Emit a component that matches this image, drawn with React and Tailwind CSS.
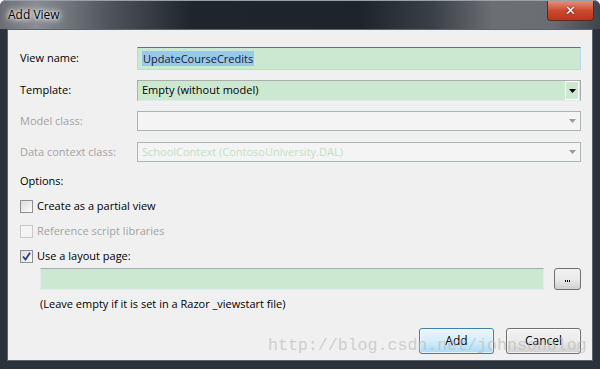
import React from 'react';

const font = { fontFamily: '"Open Sans", "Noto Sans", sans-serif' };

const Arrow = ({ disabled }) => (
  <svg width="7" height="4" viewBox="0 0 7 4">
    <path d="M0 0h7L3.5 4z" fill={disabled ? '#9a9a9a' : '#000'} />
  </svg>
);

const Checkbox = ({ checked, disabled }) => (
  <div
    className={`w-[13px] h-[13px] border flex items-center justify-center ${
      disabled ? 'border-[#c8c8c8] bg-[#f4f4f4]' : 'border-[#8e8f8f] bg-gradient-to-br from-[#dcdcdc] to-[#fbfbfb]'
    }`}
  >
    {checked && (
      <svg width="9" height="9" viewBox="0 0 9 9">
        <path d="M1 4.5l2.5 3L8 0.8" stroke="#2a3a86" strokeWidth="1.8" fill="none" />
      </svg>
    )}
  </div>
);

const Row = ({ label, disabled, children, h }) => (
  <div className={`flex items-center ${h}`}>
    <div className={`w-[117px] shrink-0 ${disabled ? 'text-[#a3a3a3]' : 'text-black'}`}>{label}</div>
    <div className="flex-1 h-full">{children}</div>
  </div>
);

export default function App() {
  return (
    <div
      className="w-[600px] h-[369px] relative flex flex-col rounded-t-[6px] bg-[#2b323b] overflow-hidden text-[11px] text-black"
      style={font}
    >
      {/* title bar */}
      <div className="h-[29px] shrink-0 flex items-start bg-[linear-gradient(90deg,#6a6e74_0%,#8a8e94_6%,#50555d_18%,#1f252d_32%,#1e242c_60%,#3a4048_72%,#6b6e73_82%,#6a6d72_92%,#3f454c_100%)] border-t border-[#9aa0a6] rounded-t-[6px]">
        <div className="pl-[8px] pt-[5px] text-[12px] text-black [text-shadow:0_0_8px_#ffffff,0_0_6px_#ffffff,0_0_3px_#ffffff]">Add View</div>
        <div className="ml-auto mr-[6px] w-[47px] h-[20px] rounded-b-[4px] border border-t-0 border-[#5a2a22] bg-gradient-to-b from-[#e0907c] via-[#cc4a2e] to-[#b8361c] flex items-center justify-center">
          <span className="text-white font-bold text-[13px] leading-none [text-shadow:0_0_2px_#3a1a10]" style={{ fontFamily: '"DejaVu Sans", sans-serif' }}>✕</span>
        </div>
      </div>

      {/* body */}
      <div className="flex-1 mx-[7px] mb-[8px] border border-[#5b636c] bg-[#f0f0f0] flex flex-col pl-[12px] pr-[11px] pt-[17px]">
        <Row label="View name:" h="h-[23px]">
          <div className="h-full bg-[#cde8d1] border border-[#b7d9ed] border-t-[#3d7bad] flex items-center pl-[4px]">
            <span className="bg-[#98c8ea] text-[#1a1a2e] px-[1px] leading-[15px]">UpdateCourseCredits</span>
          </div>
        </Row>
        <div className="h-[10px]" />
        <Row label="Template:" h="h-[21px]">
          <div className="h-full bg-[#cde8d1] border border-[#adadad] border-b-[#dfe7ef] flex items-center pl-[4px]">
            <span>Empty (without model)</span>
            <div className="ml-auto mr-[1px] w-[14px] h-[19px] border border-[#ffffff] flex items-center justify-center">
              <Arrow />
            </div>
          </div>
        </Row>
        <div className="h-[10px]" />
        <Row label="Model class:" disabled h="h-[20px]">
          <div className="h-full bg-[#f4f4f4] border border-[#acb6ac] flex items-center pr-[4px]">
            <div className="ml-auto"><Arrow disabled /></div>
          </div>
        </Row>
        <div className="h-[11px]" />
        <Row label="Data context class:" disabled h="h-[20px]">
          <div className="h-full bg-[#f4f4f4] border border-[#acb6ac] flex items-center pl-[4px] pr-[4px]">
            <span className="text-[#bfe2c4]">SchoolContext (ContosoUniversity.DAL)</span>
            <div className="ml-auto"><Arrow disabled /></div>
          </div>
        </Row>

        <div className="mt-[10px] h-[18px] flex items-center">Options:</div>
        <div className="mt-[9px] flex items-center gap-[4px] h-[14px]">
          <Checkbox />
          <span>Create as a partial view</span>
        </div>
        <div className="mt-[11px] flex items-center gap-[4px] h-[14px] text-[#a3a3a3]">
          <Checkbox disabled />
          <span>Reference script libraries</span>
        </div>
        <div className="mt-[11px] flex items-center gap-[4px] h-[14px]">
          <Checkbox checked />
          <span>Use a layout page:</span>
        </div>
        <div className="mt-[5px] pl-[20px] flex items-center h-[22px]">
          <div className="flex-1 h-full bg-[#cde8d1] border border-[#e3e9ef] border-t-[#abadb3]" />
          <div className="ml-[10px] w-[27px] h-full rounded-[3px] border border-[#707070] bg-gradient-to-b from-[#f2f2f2] via-[#ebebeb] to-[#cfcfcf] flex items-end justify-center gap-[1px] pb-[7px]">
            <div className="w-[1px] h-[2px] bg-black" />
            <div className="w-[1px] h-[2px] bg-black" />
            <div className="w-[1px] h-[2px] bg-black" />
          </div>
        </div>
        <div className="pl-[20px] mt-[6px] h-[16px] flex items-center">(Leave empty if it is set in a Razor _viewstart file)</div>

        <div className="mt-[16px] flex justify-end gap-[12px]">
          <div className="w-[75px] h-[26px] rounded-[3px] border border-[#3c7fb1] bg-gradient-to-b from-[#eaf6fd] via-[#d6eefb] to-[#a9daf6] shadow-[inset_0_0_0_1px_#ffffffaa] flex items-center justify-center text-[12px]">
            Add
          </div>
          <div className="w-[75px] h-[26px] rounded-[3px] border border-[#707070] bg-gradient-to-b from-[#f2f2f2] via-[#ebebeb] to-[#d0d0d0] shadow-[inset_0_0_0_1px_#ffffffaa] flex items-center justify-center text-[12px]">
            Cancel
          </div>
        </div>
      </div>

      {/* watermark */}
      <div
        className="absolute left-[268px] top-[334px] text-[16.6px] text-[#b8b8b8] opacity-60 pointer-events-none whitespace-nowrap"
        style={{ fontFamily: '"Liberation Mono", monospace' }}
      >
        http://blog.csdn.net/johnsonblog
      </div>
    </div>
  );
}
